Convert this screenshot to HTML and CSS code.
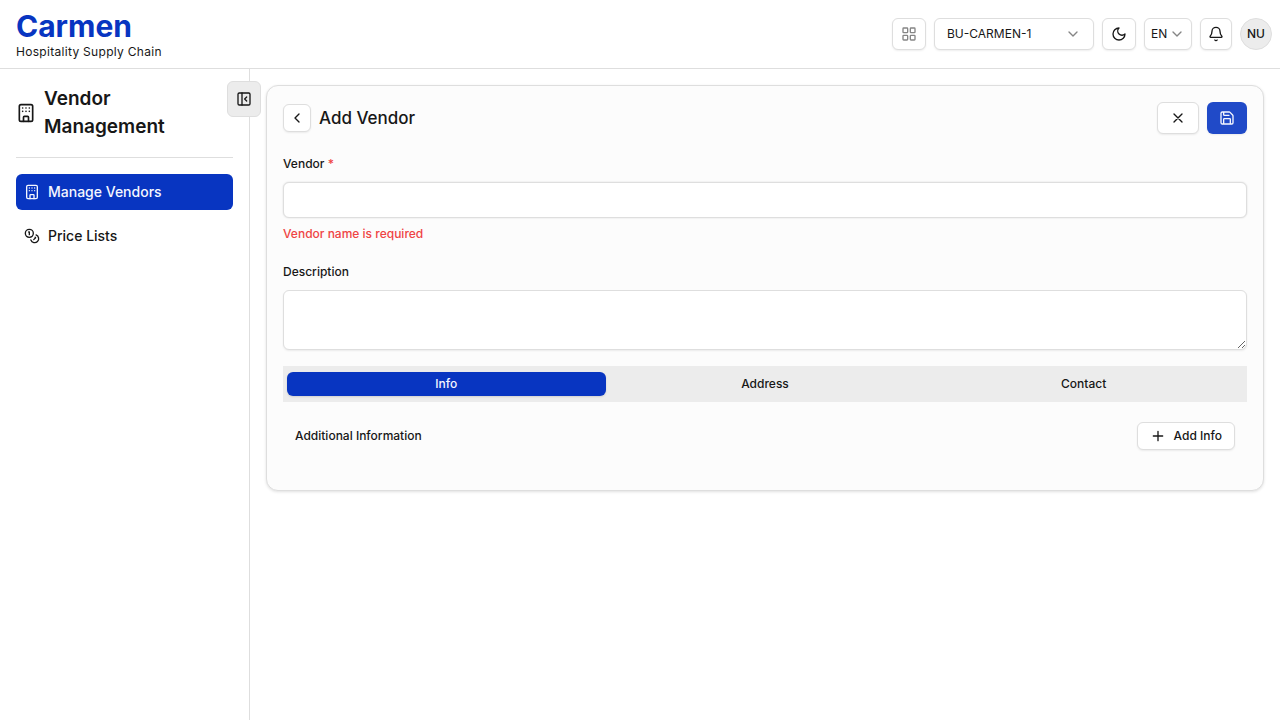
FILE: index.html
```html
<!DOCTYPE html>
<html lang="en">
<head>
<meta charset="utf-8">
<meta name="viewport" content="width=device-width, initial-scale=1">
<title>Add Vendor - Carmen</title>
<link rel="stylesheet" href="styles.css">
</head>
<body>
<svg class="sprite" aria-hidden="true">
  <symbol id="building" viewBox="0 0 24 24"><rect width="16" height="20" x="4" y="2" rx="2"/><path d="M8 10h.01M12 10h.01M12 6h.01M16 10h.01M16 6h.01M8 6h.01M9 22v-5a1 1 0 0 1 1-1h4a1 1 0 0 1 1 1v5"/></symbol>
  <symbol id="chevron-down" viewBox="0 0 24 24"><path d="m6 9 6 6 6-6"/></symbol>
</svg>
<header class="topbar">
  <div class="brand">
    <span class="brand-name">Carmen</span>
    <span class="brand-tagline">Hospitality Supply Chain</span>
  </div>
  <div class="tools">
    <button class="button tool-wide muted" type="button" aria-label="Modules"><svg class="icon" viewBox="0 0 24 24"><rect width="7" height="7" x="3" y="3" rx="1"/><rect width="7" height="7" x="14" y="3" rx="1"/><rect width="7" height="7" x="14" y="14" rx="1"/><rect width="7" height="7" x="3" y="14" rx="1"/></svg></button>
    <div class="picker picker-unit">
      <select aria-label="Business unit"><option>BU-CARMEN-1</option></select>
      <svg class="icon"><use href="#chevron-down"/></svg>
    </div>
    <button class="button tool-wide" type="button" aria-label="Toggle theme"><svg class="icon" viewBox="0 0 24 24"><path d="M12 3a6 6 0 0 0 9 9 9 9 0 1 1-9-9Z"/></svg></button>
    <div class="picker picker-language">
      <select aria-label="Language"><option>EN</option></select>
      <svg class="icon"><use href="#chevron-down"/></svg>
    </div>
    <button class="button tool" type="button" aria-label="Notifications"><svg class="icon" viewBox="0 0 24 24"><path d="M10.268 21a2 2 0 0 0 3.464 0M3.262 15.326A1 1 0 0 0 4 17h16a1 1 0 0 0 .74-1.673C19.41 13.956 18 12.499 18 8A6 6 0 0 0 6 8c0 4.499-1.411 5.956-2.738 7.326"/></svg></button>
    <button class="avatar" type="button">NU</button>
  </div>
</header>
<div class="shell">
  <aside class="sidebar">
    <button class="collapse" type="button" aria-label="Collapse sidebar"><svg class="icon" viewBox="0 0 24 24"><rect width="18" height="18" x="3" y="3" rx="2"/><path d="M9 3v18M16 15l-3-3 3-3"/></svg></button>
    <div class="module">
      <svg class="icon icon-large"><use href="#building"/></svg>
      <h2>Vendor Management</h2>
    </div>
    <nav class="menu">
      <a class="menu-item active" href="#vendors" aria-current="page"><svg class="icon"><use href="#building"/></svg>Manage Vendors</a>
      <a class="menu-item" href="#prices"><svg class="icon" viewBox="0 0 24 24"><circle cx="8" cy="8" r="6"/><path d="M18.09 10.37A6 6 0 1 1 10.34 18M7 6h1v4M16.71 13.88l.7.71-2.82 2.82"/></svg>Price Lists</a>
    </nav>
  </aside>
  <main class="content">
    <form class="card">
      <div class="card-head">
        <button class="button back" type="button" aria-label="Back"><svg class="icon" viewBox="0 0 24 24"><path d="m15 18-6-6 6-6"/></svg></button>
        <h1>Add Vendor</h1>
        <button class="button cancel" type="button" aria-label="Cancel"><svg class="icon" viewBox="0 0 24 24"><path d="M18 6 6 18M6 6l12 12"/></svg></button>
        <button class="save" type="submit" aria-label="Save"><svg class="icon" viewBox="0 0 24 24"><path d="M15.2 3a2 2 0 0 1 1.4.6l3.8 3.8a2 2 0 0 1 .6 1.4V19a2 2 0 0 1-2 2H5a2 2 0 0 1-2-2V5a2 2 0 0 1 2-2zM17 21v-7a1 1 0 0 0-1-1H8a1 1 0 0 0-1 1v7M7 3v4a1 1 0 0 0 1 1h7"/></svg></button>
      </div>
      <div class="field">
        <label for="vendor">Vendor <span class="required">*</span></label>
        <input id="vendor" type="text" aria-describedby="vendor-error">
        <p class="error" id="vendor-error">Vendor name is required</p>
      </div>
      <div class="field">
        <label for="description">Description</label>
        <textarea id="description"></textarea>
      </div>
      <div class="tabs" role="tablist">
        <button class="tab selected" type="button" role="tab" aria-selected="true">Info</button>
        <button class="tab" type="button" role="tab" aria-selected="false">Address</button>
        <button class="tab" type="button" role="tab" aria-selected="false">Contact</button>
      </div>
      <section class="details">
        <h3>Additional Information</h3>
        <button class="button add" type="button"><svg class="icon" viewBox="0 0 24 24"><path d="M5 12h14M12 5v14"/></svg>Add Info</button>
      </section>
    </form>
  </main>
</div>
</body>
</html>
```
FILE: styles.css
```css
:root {
  --primary: #0835c1;
  --line: #dedede;
  --soft: #ececec;
  --ink: #171717;
  --danger: #ef4444;
  --shadow: 0 1px 2px rgb(0 0 0 / 7%);
}
*, *::before, *::after { box-sizing: border-box; }
body {
  display: flex;
  flex-direction: column;
  min-height: 100vh;
  margin: 0;
  color: var(--ink);
  background: #fff;
  font: 12px/16px Inter, "Liberation Sans", sans-serif;
}
h1, h2, h3, p { margin: 0; }
button, input, select, textarea { color: inherit; font: inherit; }
button { padding: 0; cursor: pointer; }
.sprite { position: absolute; width: 0; height: 0; }
.icon {
  flex: none;
  width: 16px;
  height: 16px;
  fill: none;
  stroke: currentColor;
  stroke-width: 2;
  stroke-linecap: round;
  stroke-linejoin: round;
}
.icon-large { width: 20px; height: 20px; }

.topbar {
  display: flex;
  align-items: center;
  justify-content: space-between;
  padding: 8px 8px 8px 16px;
  border-bottom: 1px solid var(--line);
}
.brand { display: flex; flex-direction: column; }
.brand-name { color: var(--primary); font-size: 30px; font-weight: 700; line-height: 36px; }
.brand-tagline { letter-spacing: 0.025em; }
.tools { display: flex; align-items: center; gap: 8px; }
.button, .save {
  display: inline-flex;
  align-items: center;
  justify-content: center;
  height: 32px;
  border: 1px solid var(--line);
  border-radius: 6px;
  background: #fff;
  box-shadow: var(--shadow);
  font-weight: 500;
}
.tool { width: 32px; }
.tool-wide { width: 34px; }
.muted { color: #858585; }
.picker { display: grid; align-items: center; }
.picker select, .picker .icon { grid-area: 1 / 1; }
.picker select {
  width: 100%;
  height: 32px;
  border: 1px solid var(--line);
  border-radius: 6px;
  background: #fff;
  box-shadow: var(--shadow);
  appearance: none;
}
.picker .icon { justify-self: end; color: #858585; pointer-events: none; }
.picker-unit { width: 160px; }
.picker-unit select { padding: 0 12px; }
.picker-unit .icon { margin-right: 13px; }
.picker-language { width: 48px; }
.picker-language select { padding: 0 6px; }
.picker-language .icon { margin-right: 7px; }
.avatar {
  width: 32px;
  height: 32px;
  border: 1px solid var(--line);
  border-radius: 50%;
  background: var(--soft);
  font-weight: 500;
}

.shell { display: flex; flex: 1; }
.sidebar {
  position: relative;
  flex: none;
  width: 250px;
  padding: 16px;
  border-right: 1px solid var(--line);
}
.collapse {
  position: absolute;
  top: 12px;
  right: -12px;
  display: flex;
  align-items: center;
  justify-content: center;
  width: 34px;
  height: 36px;
  border: 1px solid var(--line);
  border-radius: 6px;
  background: var(--soft);
}
.module {
  display: flex;
  align-items: center;
  gap: 8px;
  padding-bottom: 16px;
  border-bottom: 1px solid var(--line);
}
.module h2 { font-size: 19px; font-weight: 600; line-height: 28px; }
.menu { display: flex; flex-direction: column; gap: 8px; padding-top: 16px; }
.menu-item {
  display: flex;
  align-items: center;
  gap: 8px;
  padding: 8px;
  border-radius: 6px;
  color: inherit;
  font-size: 14px;
  font-weight: 500;
  line-height: 20px;
  text-decoration: none;
}
.menu-item.active { color: #f5f7ff; background: var(--primary); }

.content { flex: 1; min-width: 0; padding: 16px; }
.card {
  display: flex;
  flex-direction: column;
  gap: 16px;
  padding: 16px;
  border: 1px solid var(--line);
  border-radius: 12px;
  background: #fcfcfc;
  box-shadow: 0 1px 3px rgb(0 0 0 / 12%);
}
.card-head { display: flex; align-items: center; gap: 8px; }
.card-head h1 { flex: 1; font-size: 17px; font-weight: 500; line-height: 28px; }
.back { width: 28px; height: 28px; }
.cancel { width: 42px; }
.save { width: 40px; border: 0; color: #f5f7ff; background: #204ac8; }
.field { display: flex; flex-direction: column; gap: 8px; padding-top: 6px; }
.field label { padding-bottom: 2px; font-weight: 500; }
.required { color: var(--danger); }
.error { color: var(--danger); font-weight: 500; }
.field input, .field textarea {
  width: 100%;
  border: 1px solid var(--line);
  border-radius: 6px;
  background: #fff;
  box-shadow: var(--shadow);
}
.field input { height: 36px; padding: 4px 12px; box-shadow: 0 0 2px rgb(0 0 0 / 14%); }
.field textarea { display: block; height: 60px; padding: 8px 12px; resize: vertical; }
.tabs {
  display: grid;
  grid-template-columns: repeat(3, 1fr);
  padding: 6px 4px;
  background: var(--soft);
}
.tab {
  height: 24px;
  border: 0;
  border-radius: 6px;
  background: none;
  font-weight: 500;
}
.tab.selected { color: #f5f7ff; background: var(--primary); box-shadow: 0 1px 2px rgb(0 0 0 / 12%); }
.details { display: flex; align-items: center; justify-content: space-between; padding: 4px 12px 24px; }
.details h3 { font-size: 12px; font-weight: 500; line-height: 16px; }
.add { gap: 8px; height: 28px; padding: 0 12px; }
```
